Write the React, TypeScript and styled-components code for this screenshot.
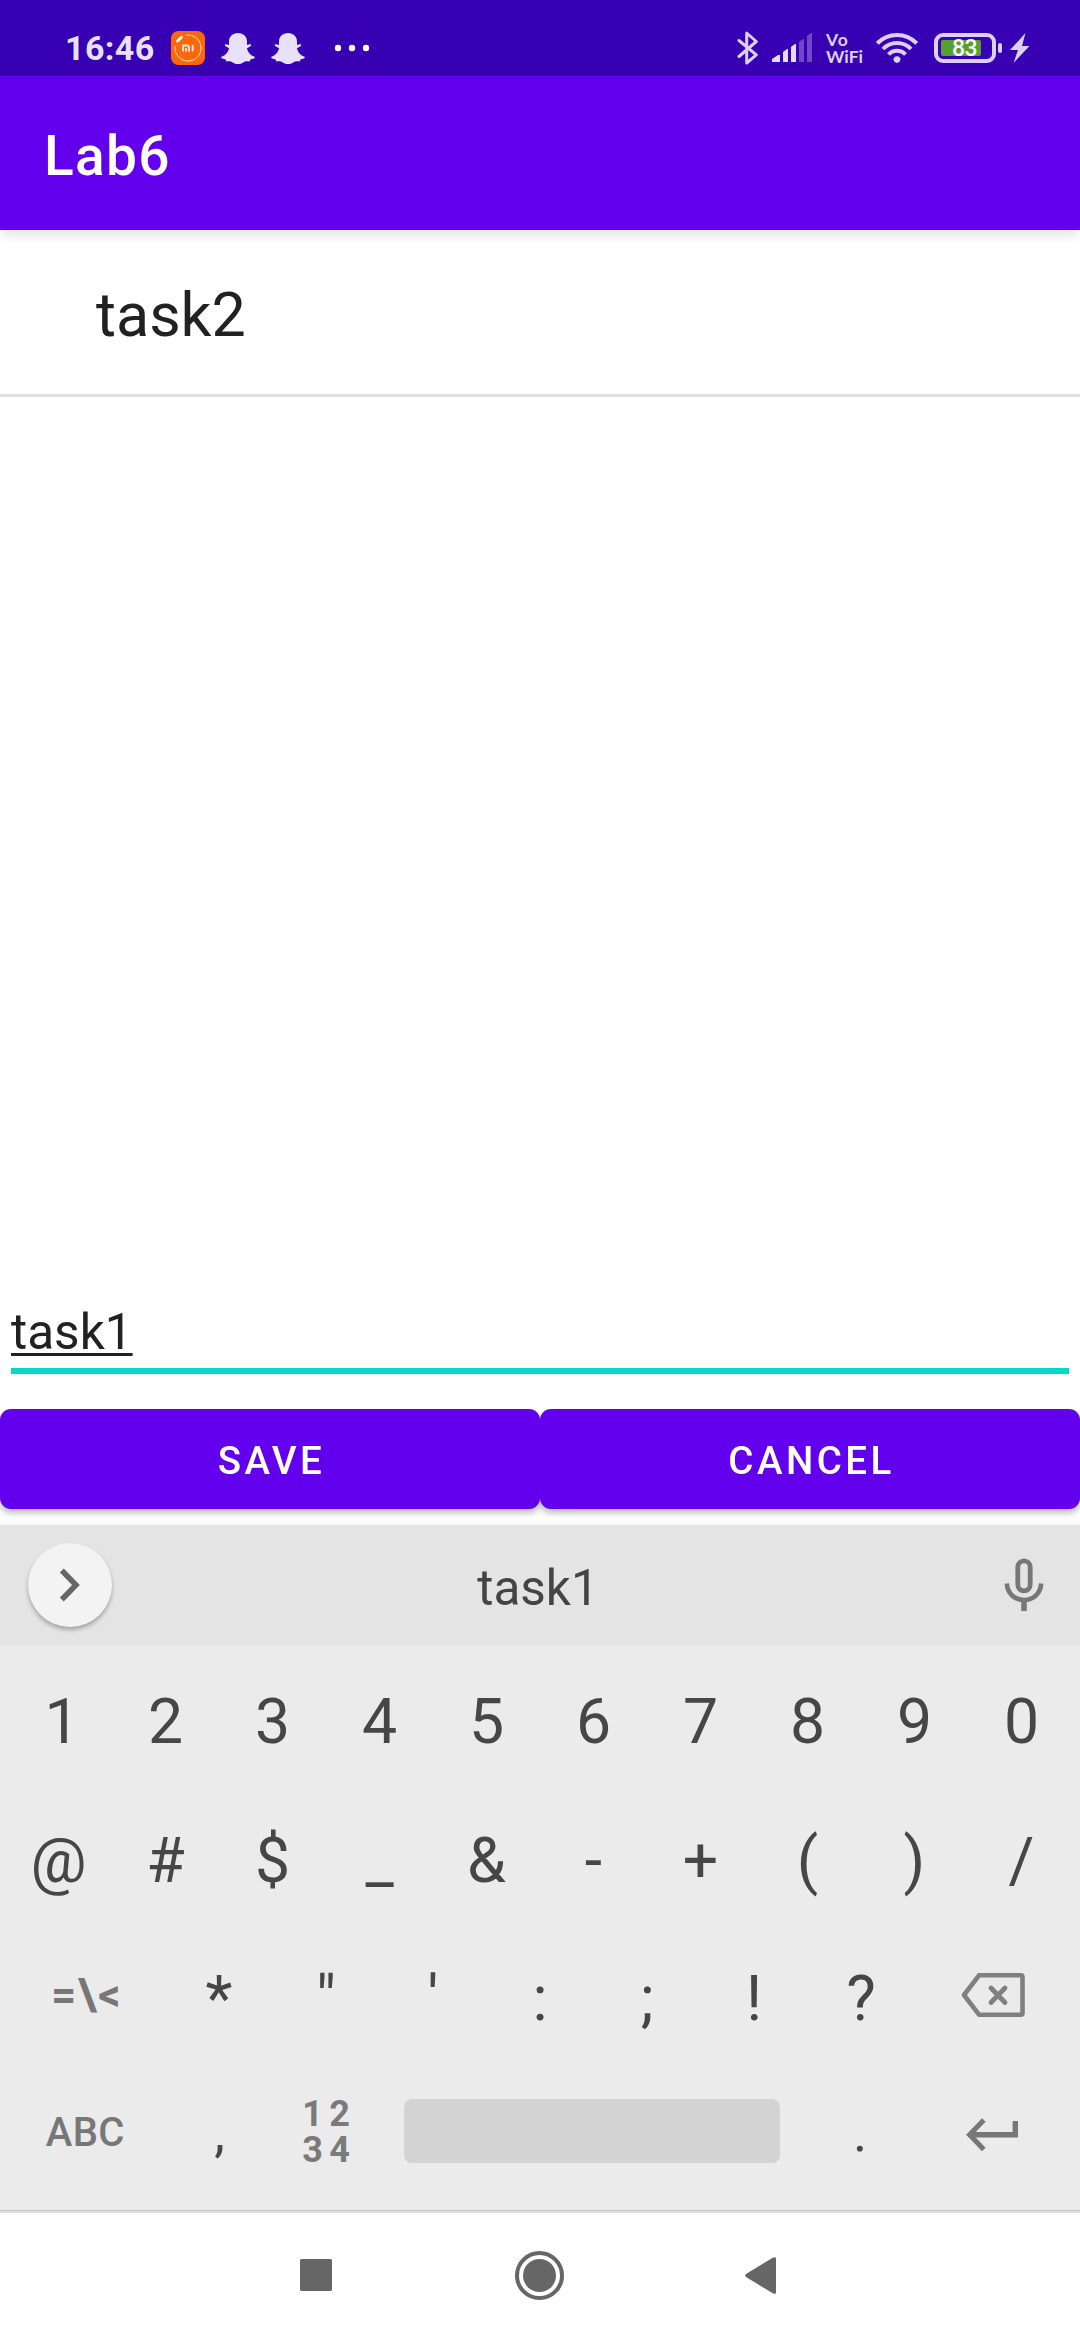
import React from "react";
import styled, { createGlobalStyle } from "styled-components";

const GlobalStyle = createGlobalStyle`
  *, *::before, *::after { box-sizing: border-box; }
  body { margin: 0; background: #fff; font-family: Roboto, "Noto Sans", sans-serif; }
  svg { display: block; flex: none; }
  button { font-family: inherit; border: 0; background: none; padding: 0; margin: 0; }
`;

const Screen = styled.div`
  display: flex;
  flex-direction: column;
  width: 1080px;
  height: 2340px;
  background: #fff;
  overflow: hidden;
`;

const StatusBar = styled.div`
  display: flex;
  justify-content: space-between;
  align-items: flex-start;
  height: 76px;
  padding: 28px 50px 0 65px;
  background: #3700b3;
  color: #e9e1f9;
`;

const StatusGroup = styled.div`
  display: flex;
  align-items: center;
  height: 40px;
`;

const Clock = styled.span`
  width: 106px;
  font-size: 34px;
  line-height: 40px;
  font-weight: 700;
  letter-spacing: 0.4px;
`;

const Spaced = styled.span<{ $right: number }>`
  display: flex;
  margin-right: ${(p) => p.$right}px;
`;

const VoWifi = styled.div`
  display: flex;
  flex-direction: column;
  width: 50px;
  font-family: Lato, Roboto, sans-serif;
  font-weight: 700;
  font-size: 17.5px;
  line-height: 17.4px;
  color: #ddd0f8;
`;

const Vo = styled.span`
  letter-spacing: 1px;
`;

const Battery = styled.div`
  display: flex;
  align-items: center;
  width: 62px;
  height: 30px;
  padding: 0 3px;
  border: 4px solid #ddd0f8;
  border-radius: 9px;
`;

const Charge = styled.div`
  display: flex;
  align-items: center;
  width: 40px;
  height: 16px;
  padding: 1px 0 0 11px;
  border-radius: 2px;
  background: #55a02f;
  color: #fff;
  font-size: 23px;
  font-weight: 500;
  letter-spacing: -0.6px;
  line-height: 16px;
`;

const BatteryTip = styled.div`
  width: 4px;
  height: 10px;
  margin: 0 8px 0 2px;
  border-radius: 2px;
  background: #ddd0f8;
`;

const AppBar = styled.header`
  display: flex;
  align-items: center;
  flex: none;
  height: 154px;
  padding: 5px 44px 0;
  background: #6200ee;
  box-shadow: 0 9px 9px -2px rgba(0, 0, 0, 0.09);
  color: #fff;
  font-size: 55px;
  font-weight: 500;
  letter-spacing: 1.3px;
`;

const TaskList = styled.main`
  flex: 1;
`;

const TaskRow = styled.div`
  display: flex;
  align-items: center;
  height: 167px;
  padding: 6px 96px 0;
  border-bottom: 3px solid #e0e0e0;
  color: #212121;
  font-size: 61px;
`;

const TextField = styled.div`
  display: flex;
  align-items: flex-end;
  flex: none;
  height: 74px;
  margin: 0 11px 35px;
  padding-bottom: 7px;
  border-bottom: 6px solid #03dac5;
  color: #212121;
  font-size: 49.5px;
  line-height: 58px;
`;

const Composing = styled.span`
  text-decoration: underline;
  text-decoration-thickness: 3px;
  text-underline-offset: 4px;
  text-decoration-skip-ink: none;
`;

const Actions = styled.div`
  display: flex;
  flex: none;
  height: 116px;
  filter: drop-shadow(0 4px 3px rgba(0, 0, 0, 0.27));
`;

const Action = styled.button`
  flex: 1;
  height: 100px;
  padding: 2px 0 0 3px;
  border-radius: 11px;
  background: #6200ee;
  color: #fff;
  font-size: 38.5px;
  font-weight: 500;
  letter-spacing: 3.44px;
`;

const Keyboard = styled.section`
  display: flex;
  flex-direction: column;
  flex: none;
  height: 688px;
  background: #ebebeb;
  border-bottom: 2px solid #dedede;
  box-shadow: inset 0 -1px 0 #c8c8c8, 0 -2px 6px rgba(0, 0, 0, 0.05);
`;

const Suggestions = styled.div`
  display: grid;
  grid-template-columns: 84px 1fr 84px;
  align-items: center;
  height: 121px;
  padding: 0 14px 0 28px;
  background: #e4e4e4;
`;

const Expand = styled.button`
  display: flex;
  align-items: center;
  justify-content: center;
  width: 84px;
  height: 84px;
  margin-bottom: 1px;
  border-radius: 50%;
  background: #f3f3f3;
  box-shadow: 0 3px 4px rgba(0, 0, 0, 0.28);
`;

const Suggestion = styled.span`
  padding: 4px 18px 0 0;
  text-align: center;
  color: #444;
  font-size: 49.5px;
`;

const MicSlot = styled.div`
  display: flex;
  justify-content: center;
  padding-bottom: 2px;
`;

const Keys = styled.div`
  display: flex;
  flex-direction: column;
  padding: 7px 5px 0;
`;

const KeyRow = styled.div<{ $height?: number }>`
  display: flex;
  height: ${(p) => p.$height ?? 138.5}px;
`;

const Key = styled.button<{ $size?: number; $lift?: number; $drop?: number; $indent?: number }>`
  display: flex;
  align-items: center;
  justify-content: center;
  width: 107px;
  padding: ${(p) => p.$drop ?? 0}px 0 ${(p) => p.$lift ?? 0}px ${(p) => p.$indent ?? 0}px;
  color: #464646;
  font-size: ${(p) => p.$size ?? 62.5}px;
  line-height: 72px;
`;

const WideKey = styled(Key)<{ $bold?: boolean }>`
  width: 160.5px;
  color: #777;
  font-weight: ${(p) => (p.$bold ? 700 : 500)};
  letter-spacing: ${(p) => (p.$bold ? 1.8 : 0.3)}px;
`;

const NumpadKey = styled(Key)`
  display: grid;
  grid-template-columns: 27px 27px;
  align-content: center;
  justify-items: center;
  color: #7a7a7a;
  font-size: 36px;
  font-weight: 700;
  line-height: 36px;
`;

const SpaceKey = styled.div`
  align-self: center;
  width: 376px;
  height: 64px;
  margin: 0 26.5px 1px 24.5px;
  border-radius: 8px;
  background: #d3d3d3;
`;

const NavBar = styled.nav`
  display: flex;
  align-items: flex-start;
  flex: none;
  height: 127px;
  padding: 38px 0 0 300px;
`;

const Ghost = () => (
  <svg width="34" height="31" viewBox="0 0 34 31" fill="#e9e1f9">
    <path d="M17 0C11.500 0 8 3.600 8 8.500V12L5.200 11.200C3.700 11 3.200 12.600 4.600 13.300L8 15.200C7.500 18.500 4.600 22.300.9 23.600C-.2 24 .1 25.300 1.200 25.600L4.600 26.500L5.300 28.400C8 28.100 10 28.300 11.700 29.400C13.600 30.600 15 31 17 31S20.400 30.600 22.300 29.400C24 28.300 26 28.100 28.700 28.400L29.400 26.500L32.800 25.600C33.900 25.300 34.200 24 33.100 23.600C29.400 22.300 26.500 18.500 26 15.200L29.400 13.300C30.800 12.600 30.300 11 28.800 11.200L26 12V8.500C26 3.600 22.500 0 17 0Z" />
  </svg>
);

const MiIcon = () => (
  <svg width="34" height="34" viewBox="0 0 34 34" fill="none">
    <rect width="34" height="34" rx="7.500" fill="#ff6709" />
    <path d="M15 4.200A13 13 0 1 1 4.200 15" stroke="#ffe3d0" strokeWidth="1" />
    <path d="M6.500 10L10.500 6.200" stroke="#fff" strokeWidth="2.800" strokeLinecap="round" />
    <path d="M12 20.500V14.500H16Q18 14.500 18 16.500V20.500M15 17V20.500M21.700 13.800V20.500" stroke="#ffe9dc" strokeWidth="1.800" />
  </svg>
);

const Dots = () => (
  <svg width="36" height="8" viewBox="0 0 36 8" fill="#fff">
    <circle cx="4" cy="4" r="3.200" />
    <circle cx="18" cy="4" r="3.200" />
    <circle cx="32" cy="4" r="3.200" />
  </svg>
);

const BluetoothIcon = () => (
  <svg width="22" height="34" viewBox="0 0 22 34" fill="none" stroke="#ddd0f8" strokeWidth="3" strokeLinejoin="round" strokeLinecap="round">
    <path d="M2 9.500L19.300 23.800L9.700 32V2L19.300 10.500L2 25.500" />
  </svg>
);

const SignalIcon = () => (
  <svg width="40" height="30" viewBox="0 0 40 30" fill="#e6dcfa">
    <path d="M0 29V26L6 22H8V29Z" />
    <path d="M11 29V19L15 16H16V29Z" />
    <path d="M19 29V14L23 11H24V29Z" />
    <path d="M27 29V9L31 6H32V29Z" fill="#7047cb" />
    <path d="M35 29V3L39 0H40V29Z" fill="#7047cb" />
  </svg>
);

const WifiIcon = () => (
  <svg width="42" height="30" viewBox="0 0 42 30" fill="none" stroke="#ddd0f8" strokeWidth="4">
    <path d="M1.300 10.400C12-.800 30-.800 40.700 10.400" />
    <path d="M7 16C14.500 8 27.500 8 35 16" />
    <path d="M12.500 21.500C17 16.500 25 16.500 29.500 21.500" />
    <path d="M17 26.200Q21 22.300 25 26.200L21 30Z" fill="#ddd0f8" stroke="none" />
    <circle cx="21" cy="26.500" r="3.200" fill="#ddd0f8" stroke="none" />
  </svg>
);

const BoltIcon = () => (
  <svg width="20" height="30" viewBox="0 0 20 30" fill="#ddd0f8">
    <path d="M15.500 0L0 17H8L3.500 30L19.500 13H12Z" />
  </svg>
);

const ChevronIcon = () => (
  <svg width="24" height="34" viewBox="0 0 24 34" fill="none" stroke="#666" strokeWidth="5.500">
    <path d="M3.800 2.500L18 17L3.800 31.500" />
  </svg>
);

const MicIcon = () => (
  <svg width="40" height="54" viewBox="0 0 40 54" fill="none" stroke="#777" strokeWidth="4.800">
    <rect x="13.800" y="2.800" width="12.400" height="30" rx="6.200" />
    <path d="M2.800 25.500C3.500 35.500 10.500 42 20 42S36.500 35.500 37.200 25.500" strokeWidth="4.600" />
    <path d="M20 42V53" strokeWidth="5.600" />
  </svg>
);

const BackspaceIcon = () => (
  <svg width="64" height="44" viewBox="0 0 64 44" fill="none" stroke="#808080" strokeLinejoin="round" strokeLinecap="round">
    <path d="M18 2.300H60Q61.500 2.300 61.500 3.800V40.200Q61.500 41.700 60 41.700H18L3 22Z" strokeWidth="4.600" />
    <path d="M30 15L44 29.500M44 15L30 29.500" strokeWidth="4.800" />
  </svg>
);

const EnterIcon = () => (
  <svg width="52" height="34" viewBox="0 0 52 34" fill="none" stroke="#777" strokeWidth="5.400">
    <path d="M49.300 3V16.700H4.500" />
    <path d="M17.800 2L3.600 16.700L17.800 31.400" strokeWidth="5" />
  </svg>
);

const NavIcons = () => (
  <>
    <Spaced $right={183}>
      <svg width="32" height="49" viewBox="0 0 32 49" fill="#666">
        <rect y="8" width="32" height="32" rx="1.500" />
      </svg>
    </Spaced>
    <Spaced $right={181}>
      <svg width="49" height="49" viewBox="0 0 49 49" fill="#666">
        <circle cx="24.500" cy="24.500" r="22.500" fill="none" stroke="#666" strokeWidth="4" />
        <circle cx="24.500" cy="24.500" r="16.500" />
      </svg>
    </Spaced>
    <svg width="32" height="49" viewBox="0 0 32 49" fill="#666">
      <path d="M1 23Q-.800 24.500 1 26L27.800 42.300Q31 43.600 31 41.500V7.500Q31 5.400 27.800 6.700Z" />
    </svg>
  </>
);

const digits = ["1", "2", "3", "4", "5", "6", "7", "8", "9", "0"];
const symbols = ["@", "#", "$", "_", "&", "-", "+", "(", ")", "/"];
const punctuation = ["*", '"', "'", ":", ";", "!", "?"];

export default function App() {
  return (
    <Screen>
      <GlobalStyle />
      <StatusBar>
        <StatusGroup>
          <Clock>16:46</Clock>
          <Spaced $right={16}><MiIcon /></Spaced>
          <Spaced $right={16}><Ghost /></Spaced>
          <Spaced $right={29}><Ghost /></Spaced>
          <Dots />
        </StatusGroup>
        <StatusGroup>
          <Spaced $right={13}><BluetoothIcon /></Spaced>
          <Spaced $right={14}><SignalIcon /></Spaced>
          <VoWifi>
            <Vo>Vo</Vo>
            <span>WiFi</span>
          </VoWifi>
          <Spaced $right={16}><WifiIcon /></Spaced>
          <Battery><Charge>83</Charge></Battery>
          <BatteryTip />
          <BoltIcon />
        </StatusGroup>
      </StatusBar>
      <AppBar>Lab6</AppBar>
      <TaskList>
        <TaskRow>task2</TaskRow>
      </TaskList>
      <TextField><Composing>task1</Composing></TextField>
      <Actions>
        <Action>SAVE</Action>
        <Action>CANCEL</Action>
      </Actions>
      <Keyboard>
        <Suggestions>
          <Expand><ChevronIcon /></Expand>
          <Suggestion>task1</Suggestion>
          <MicSlot><MicIcon /></MicSlot>
        </Suggestions>
        <Keys>
          <KeyRow>{digits.map((k) => <Key key={k} $indent={k === "1" ? 7 : 0}>{k}</Key>)}</KeyRow>
          <KeyRow>{symbols.map((k) => <Key key={k}>{k}</Key>)}</KeyRow>
          <KeyRow>
            <WideKey $bold $size={43.5} $lift={7} $indent={3}>=\&lt;</WideKey>
            {punctuation.map((k) => <Key key={k}>{k}</Key>)}
            <WideKey $lift={8}><Spaced $right={3}><BackspaceIcon /></Spaced></WideKey>
          </KeyRow>
          <KeyRow $height={126}>
            <WideKey $size={40} $drop={2}>ABC</WideKey>
            <Key $size={54} $drop={3} $indent={1}>,</Key>
            <NumpadKey $drop={1}>
              <span>1</span><span>2</span><span>3</span><span>4</span>
            </NumpadKey>
            <SpaceKey />
            <Key $size={54} $drop={3}>.</Key>
            <WideKey $drop={6}><Spaced $right={4}><EnterIcon /></Spaced></WideKey>
          </KeyRow>
        </Keys>
      </Keyboard>
      <NavBar><NavIcons /></NavBar>
    </Screen>
  );
}
